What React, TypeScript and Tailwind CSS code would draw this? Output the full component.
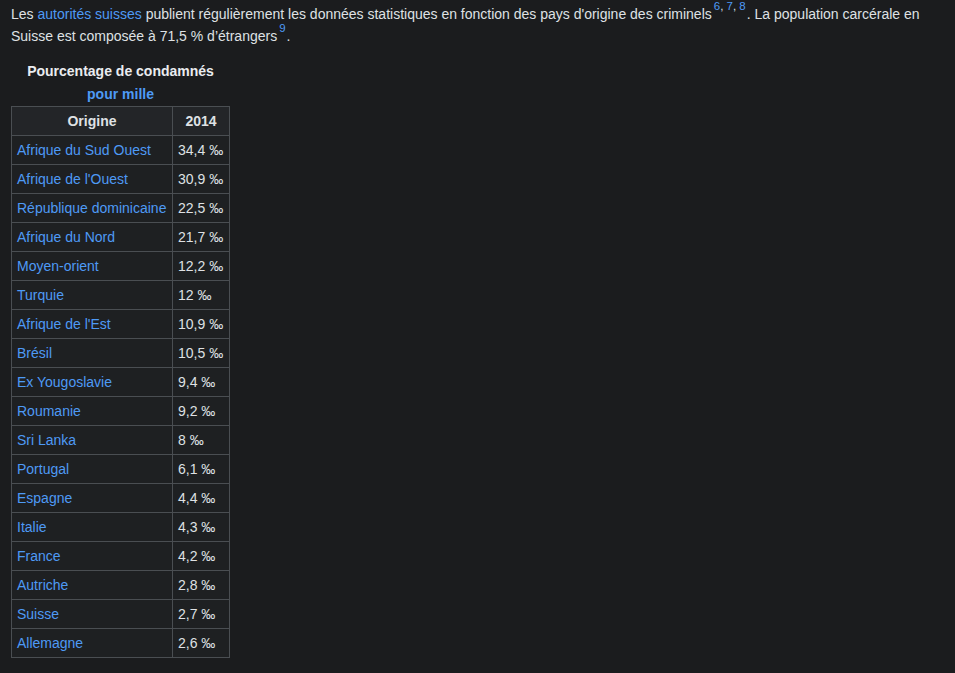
import React from 'react';

const rows: [string, string][] = [
  ['Afrique du Sud Ouest', '34,4 ‰'],
  ["Afrique de l'Ouest", '30,9 ‰'],
  ['République dominicaine', '22,5 ‰'],
  ['Afrique du Nord', '21,7 ‰'],
  ['Moyen-orient', '12,2 ‰'],
  ['Turquie', '12 ‰'],
  ["Afrique de l'Est", '10,9 ‰'],
  ['Brésil', '10,5 ‰'],
  ['Ex Yougoslavie', '9,4 ‰'],
  ['Roumanie', '9,2 ‰'],
  ['Sri Lanka', '8 ‰'],
  ['Portugal', '6,1 ‰'],
  ['Espagne', '4,4 ‰'],
  ['Italie', '4,3 ‰'],
  ['France', '4,2 ‰'],
  ['Autriche', '2,8 ‰'],
  ['Suisse', '2,7 ‰'],
  ['Allemagne', '2,6 ‰'],
];

function Ref({ n }: { n: string }) {
  return <span className="text-[#4e9af5]">{n}</span>;
}

export default function App() {
  return (
    <div
      className="min-h-[673px] w-full bg-[#1b1c1e] px-[11px] pt-[3px] text-[14px] text-[#dfe1e4]"
      style={{ fontFamily: '"Liberation Sans", Arial, sans-serif' }}
    >
      <p className="leading-[22px]">
        Les <a className="text-[#4e9af5]">autorités suisses</a> publient régulièrement les données statistiques en
        fonction des pays d'origine des criminels
        <sup className="top-[-9px] pl-[2px] pr-[1px] text-[11.5px] leading-none">
          <Ref n="6" />, <Ref n="7" />, <Ref n="8" />
        </sup>
        . La population carcérale en Suisse est composée à 71,5 % d’étrangers
        <sup className="top-[-9px] pl-[2px] pr-[1px] text-[11.5px] leading-none">
          <Ref n="9" />
        </sup>
        .
      </p>

      <table className="mt-[13px] border-collapse">
        <caption className="font-bold leading-[23px] text-[#eaecf0]">
          Pourcentage de condamnés
          <br />
          <a className="text-[#4e9af5]">pour mille</a>
        </caption>
        <thead>
          <tr className="h-[29px] bg-[#232528]">
            <th className="w-[161px] border border-[#4a4e52] px-[5px] text-center font-bold">Origine</th>
            <th className="w-[57px] border border-[#4a4e52] px-[5px] text-center font-bold">2014</th>
          </tr>
        </thead>
        <tbody>
          {rows.map(([name, value]) => (
            <tr key={name} className="h-[29px] bg-[#1e2022]">
              <td className="whitespace-nowrap border border-[#4a4e52] px-[5px] text-[#4e9af5]">{name}</td>
              <td className="whitespace-nowrap border border-[#4a4e52] px-[5px]">{value}</td>
            </tr>
          ))}
        </tbody>
      </table>
    </div>
  );
}
